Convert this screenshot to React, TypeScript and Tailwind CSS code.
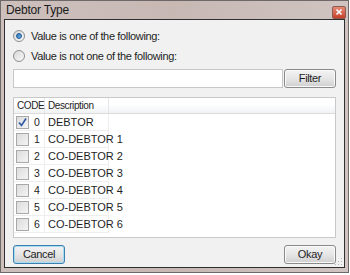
import React from 'react';

const rows = [
  { code: '0', desc: 'DEBTOR', checked: true },
  { code: '1', desc: 'CO-DEBTOR 1', checked: false },
  { code: '2', desc: 'CO-DEBTOR 2', checked: false },
  { code: '3', desc: 'CO-DEBTOR 3', checked: false },
  { code: '4', desc: 'CO-DEBTOR 4', checked: false },
  { code: '5', desc: 'CO-DEBTOR 5', checked: false },
  { code: '6', desc: 'CO-DEBTOR 6', checked: false },
];

function Radio({ selected, label }: { selected: boolean; label: string }) {
  return (
    <div className="flex items-center gap-[6px] h-[14px]">
      <span className="w-[12px] h-[12px] rounded-full border border-[#8f8f8f] bg-gradient-to-br from-[#d8d8d8] to-[#f8f8f8] flex items-center justify-center">
        {selected && (
          <span className="w-[6px] h-[6px] rounded-full bg-gradient-to-br from-[#2a6fb0] to-[#7ab4e6] border border-[#1c5a96]" />
        )}
      </span>
      <span className="text-[#1e1e1e]">{label}</span>
    </div>
  );
}

function Check({ checked }: { checked: boolean }) {
  return (
    <span className="w-[13px] h-[13px] border border-[#a8a8a8] bg-gradient-to-br from-[#dcdcdc] to-[#f4f4f4] flex items-center justify-center shrink-0">
      {checked && (
        <svg width="11" height="11" viewBox="0 0 11 11">
          <path d="M2 5.5 L4.5 8.5 L9 1.5" fill="none" stroke="#2c58a8" strokeWidth="1.6" />
        </svg>
      )}
    </span>
  );
}

function Button({ label, focused }: { label: string; focused?: boolean }) {
  return (
    <button
      className={
        'w-[52px] h-[19px] rounded-[3px] border bg-gradient-to-b from-[#f3f3f3] via-[#e6e6e6] to-[#cfcfcf] text-[#1e1e1e] flex items-center justify-center ' +
        (focused ? 'border-[#3c7fb1] shadow-[inset_0_0_0_1px_#a8dcf2]' : 'border-[#8a8a8a] shadow-[inset_0_0_0_1px_#fafafa]')
      }
    >
      {label}
    </button>
  );
}

export default function App() {
  return (
    <div
      className="w-[350px] h-[275px] bg-white text-[11px] tracking-[-0.35px] leading-none"
      style={{ fontFamily: '"Liberation Sans", Arial, sans-serif' }}
    >
      <div className="w-[349px] h-[273px] border border-[#6e6868] bg-gradient-to-r from-[#cdc0bc] via-[#c7b8b4] to-[#cfc4c1] flex flex-col">
        <div className="h-[18px] flex items-center justify-between pl-[5px] pr-[2px]">
          <span className="text-[12px] text-[#1a1a1a] tracking-[-0.2px]">Debtor Type</span>
          <span className="w-[14px] h-[13px] mt-[4px] rounded-[2px] border border-[#8d5a50] bg-gradient-to-b from-[#e58a76] to-[#c6402a] flex items-center justify-center">
            <svg width="6" height="6" viewBox="0 0 6 6">
              <path d="M0.5 0.5 L5.5 5.5 M5.5 0.5 L0.5 5.5" stroke="#f4f4f4" strokeWidth="1.6" />
            </svg>
          </span>
        </div>
        <div className="flex-1 mx-[3px] mb-[4px] border border-[#2f2f2f] bg-[#f0f1f0] flex flex-col px-[8px] pt-[9px] relative">
          <div className="flex flex-col gap-[6px]">
            <Radio selected label="Value is one of the following:" />
            <Radio selected={false} label="Value is not one of the following:" />
          </div>
          <div className="flex items-center gap-[1px] mt-[6px]">
            <div className="flex-1 h-[19px] bg-white border border-[#c8c8c8]" />
            <Button label="Filter" />
          </div>
          <div className="mt-[9px] h-[141px] bg-white border border-[#c9c9c9] flex flex-col text-[10.5px] tracking-[-0.3px] whitespace-nowrap">
            <div className="h-[16px] flex items-stretch bg-gradient-to-b from-white from-40% to-[#f1f2f4] border-b border-[#dcdcdc] text-[#1e1e1e] text-[10px] tracking-[-0.4px]">
              <div className="w-[31px] pl-[3px] flex items-center border-r border-[#e6e6e6]">CODE</div>
              <div className="w-[64px] pl-[3px] flex items-center border-r border-[#e6e6e6]">Description</div>
              <div className="flex-1" />
            </div>
            {rows.map((r) => (
              <div key={r.code} className="h-[17px] flex items-stretch text-[#1e1e1e]">
                <div className="w-[31px] flex items-center gap-[5px] pl-[2px] border-b border-r border-[#eeeeee]">
                  <Check checked={r.checked} />
                  <span>{r.code}</span>
                </div>
                <div
                  className="w-[64px] pl-[3px] flex items-center border-b border-r border-[#eeeeee] text-[11px] tracking-[0px]"
                  style={{ fontFamily: '"Liberation Sans Narrow", "Arial Narrow", sans-serif' }}
                >
                  {r.desc}
                </div>
                <div className="flex-1" />
              </div>
            ))}
          </div>
          <div className="mt-[7px] flex justify-between">
            <Button label="Cancel" focused />
            <Button label="Okay" />
          </div>
          <svg className="absolute right-[1px] bottom-[1px]" width="8" height="8" viewBox="0 0 8 8">
            <rect x="6" y="0" width="1" height="1" fill="#b8b8b8" />
            <rect x="6" y="3" width="1" height="1" fill="#b8b8b8" />
            <rect x="3" y="3" width="1" height="1" fill="#b8b8b8" />
            <rect x="6" y="6" width="1" height="1" fill="#b8b8b8" />
            <rect x="3" y="6" width="1" height="1" fill="#b8b8b8" />
            <rect x="0" y="6" width="1" height="1" fill="#b8b8b8" />
          </svg>
        </div>
      </div>
    </div>
  );
}
